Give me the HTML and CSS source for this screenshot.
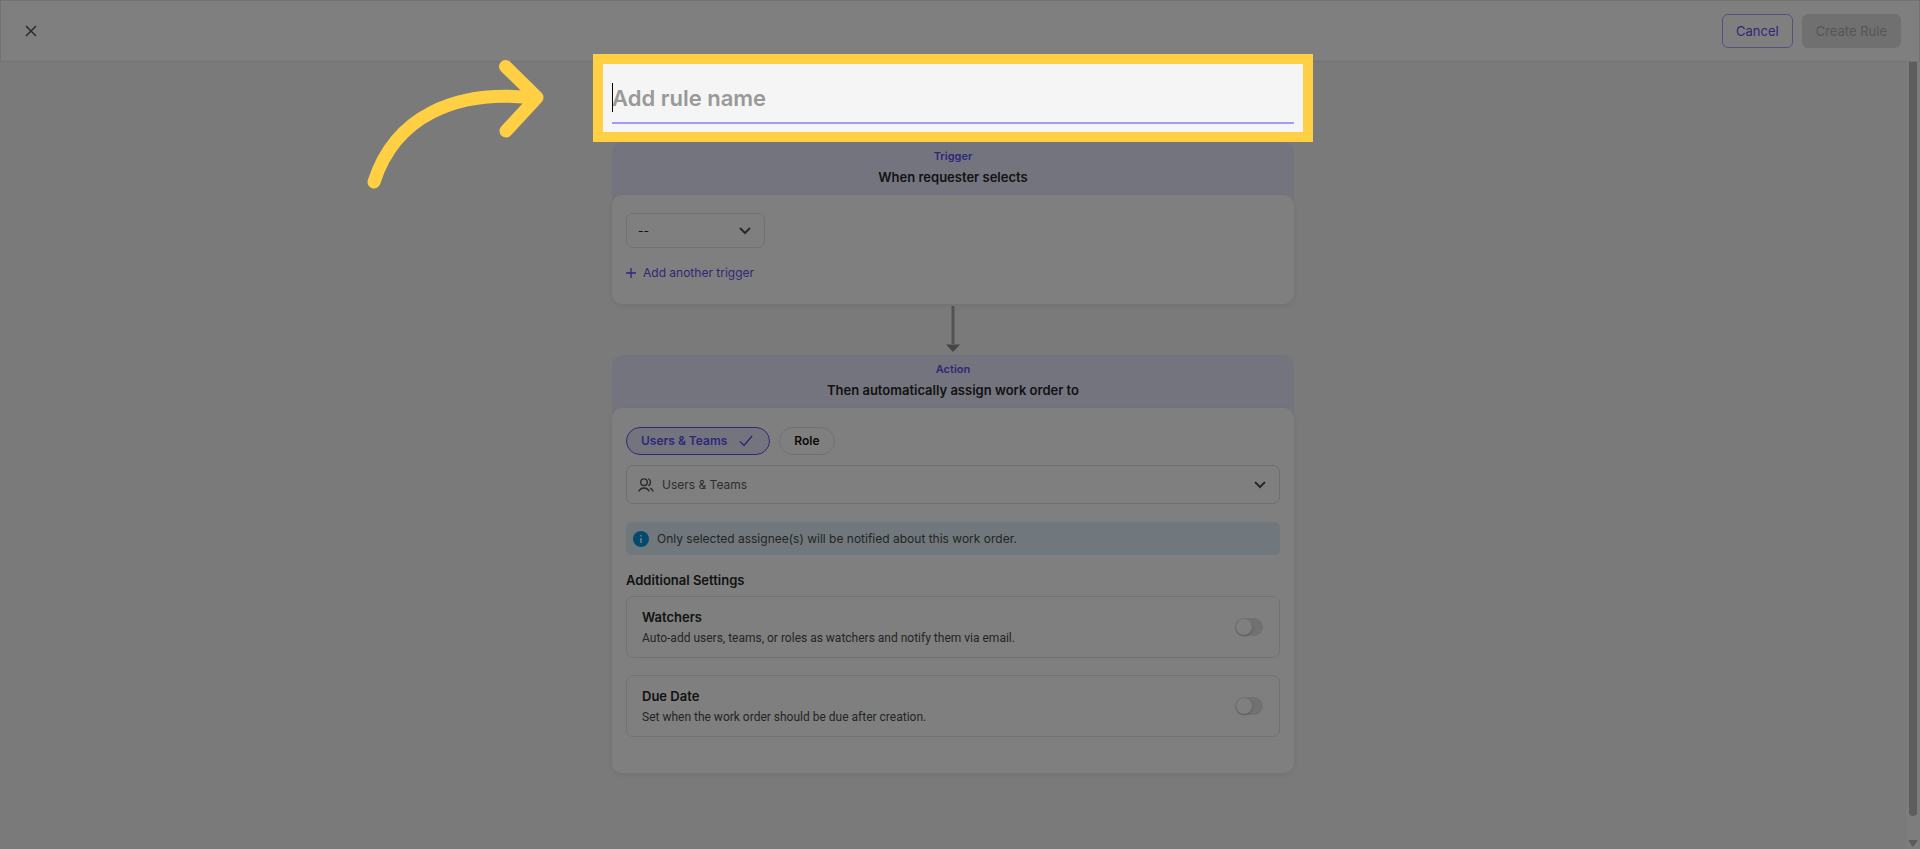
FILE: index.html
```html
<!DOCTYPE html>
<html lang="en">
<head>
<meta charset="utf-8">
<title>Create Rule</title>
<link rel="stylesheet" href="styles.css">
</head>
<body>
<div class="page">
  <header class="topbar">
    <button class="close" type="button" aria-label="Close">
      <svg width="12" height="12" viewBox="0 0 12 12" fill="none" stroke="currentColor" stroke-width="1.5"><path d="M1 1l10 10M11 1L1 11"/></svg>
    </button>
    <div class="topbar-actions">
      <button class="btn btn-outline" type="button">Cancel</button>
      <button class="btn btn-disabled" type="button" disabled>Create Rule</button>
    </div>
  </header>
  <div class="scroller">
    <main class="content">
      <div class="rule-name">
        <input class="rule-input" type="text" placeholder="Add rule name" aria-label="Rule name">
        <span class="caret"></span>
        <div class="spotlight"></div>
        <svg class="pointer" width="180" height="132" viewBox="0 0 180 132" fill="none" stroke="#ffd043" stroke-width="13" stroke-linecap="round" stroke-linejoin="round"><path d="M10 123C31 57 92 31 165 38.500"/><path d="M141.500 7.500L173 38.500L142 72"/></svg>
      </div>

      <section class="card">
        <div class="card-head">
          <p class="kind">Trigger</p>
          <h2 class="title">When requester selects</h2>
        </div>
        <div class="card-body">
          <div class="select-box select-small">
            <select class="select" aria-label="Trigger"><option>--</option></select>
            <svg class="chevron" width="12" height="8" viewBox="0 0 12 8" fill="none" stroke="currentColor" stroke-width="2"><path d="M1 1l5 5 5-5"/></svg>
          </div>
          <button class="add" type="button">
            <svg width="10" height="10" viewBox="0 0 10 10" fill="none" stroke="currentColor" stroke-width="1.300"><path d="M5 0v10M0 5h10"/></svg>
            Add another trigger
          </button>
        </div>
      </section>

      <svg class="connector" width="14" height="51" viewBox="0 0 14 51"><path fill="#a6a6a6" d="M5.500 2h3v38h-3z"/><path fill="#8c8c8c" d="M0 40.500h14l-7 7.500z"/></svg>

      <section class="card">
        <div class="card-head">
          <p class="kind">Action</p>
          <h2 class="title">Then automatically assign work order to</h2>
        </div>
        <div class="card-body">
          <div class="pills">
            <button class="pill pill-on" type="button" aria-pressed="true">Users &amp; Teams
              <svg width="14" height="12" viewBox="0 0 14 12" fill="none" stroke="currentColor" stroke-width="1.500"><path d="M1 6.500l4 4L13 1"/></svg>
            </button>
            <button class="pill" type="button" aria-pressed="false">Role</button>
          </div>
          <div class="select-box select-wide">
            <svg class="people" width="16" height="14" viewBox="0 0 16 14" fill="none" stroke="currentColor" stroke-width="1.400" stroke-linecap="round"><circle cx="6" cy="4.200" r="3.300"/><path d="M1 13c1-2 2.800-3 5-3s4 1 5 3M10.800 1c2.200 1.200 2.200 5.200 0 6.400M12.500 10.300c1 .500 1.900 1.300 2.500 2.700"/></svg>
            <select class="select" aria-label="Assignee"><option>Users &amp; Teams</option></select>
            <svg class="chevron" width="12" height="8" viewBox="0 0 12 8" fill="none" stroke="currentColor" stroke-width="2"><path d="M1 1l5 5 5-5"/></svg>
          </div>
          <div class="notice">
            <svg width="16" height="16" viewBox="0 0 16 16"><circle cx="8" cy="8" r="8" fill="#0696dc"/><path d="M7.200 7h1.600v5H7.200zM7.200 4h1.600v1.600H7.200z" fill="#e0f0fa"/></svg>
            Only selected assignee(s) will be notified about this work order.
          </div>
          <h3 class="subhead">Additional Settings</h3>
          <div class="settings">
            <label class="setting">
              <span class="setting-text">
                <span class="setting-name">Watchers</span>
                <span class="setting-desc">Auto-add users, teams, or roles as watchers and notify them via email.</span>
              </span>
              <input class="toggle" type="checkbox" role="switch">
            </label>
            <label class="setting">
              <span class="setting-text">
                <span class="setting-name">Due Date</span>
                <span class="setting-desc">Set when the work order should be due after creation.</span>
              </span>
              <input class="toggle" type="checkbox" role="switch">
            </label>
          </div>
        </div>
      </section>
    </main>
    <div class="scrollbar" aria-hidden="true">
      <div class="thumb"></div>
      <svg width="10" height="7" viewBox="0 0 10 7"><path d="M1.500 0h7q1.500 0 .7 1.200L6 6q-1 1.200-2 0L.8 1.200Q0 0 1.500 0z" fill="#b8b8b8"/></svg>
    </div>
  </div>
</div>
</body>
</html>
```
FILE: styles.css
```css
* {
  box-sizing: border-box;
}

body {
  margin: 0;
  overflow: hidden;
  font-family: Inter, "Open Sans", sans-serif;
  font-size: 12px;
  line-height: 16px;
  color: #262626;
  background: #f5f5f5;
}

p, h2, h3 {
  margin: 0;
}

button, input, select {
  font: inherit;
  color: inherit;
}

.page {
  display: flex;
  flex-direction: column;
  height: 100vh;
}

.topbar {
  display: flex;
  align-items: center;
  justify-content: space-between;
  height: 62px;
  padding: 0 18px 0 19px;
  border: 1px solid #e6e6e6;
  background: #fff;
}

.close {
  display: flex;
  padding: 5px;
  border: 0;
  background: none;
  color: #555;
}

.topbar-actions {
  display: flex;
  gap: 9px;
}

.btn {
  height: 34px;
  padding: 0 13px;
  border: 1px solid transparent;
  border-radius: 6px;
  font-size: 13px;
}

.btn-outline {
  border-color: #a9a3ff;
  background: #fff;
  color: #5d50f0;
}

.btn-disabled {
  background: #e0e0e0;
  color: #adadad;
}

.scroller {
  display: flex;
  flex: 1;
  min-height: 0;
}

.content {
  display: flex;
  flex: 1;
  flex-direction: column;
  align-items: center;
  padding-top: 12px;
}

.content > .rule-name,
.content > .card {
  width: 682px;
  max-width: 100%;
}

.rule-name {
  position: relative;
  margin-bottom: 18px;
}

.rule-input {
  display: block;
  width: 100%;
  height: 50px;
  padding: 0;
  border: 0;
  border-bottom: 2px solid #a09aff;
  outline: 0;
  background: transparent;
  font-size: 22px;
  font-weight: 600;
}

.rule-input::placeholder {
  color: #999;
}

.caret {
  position: absolute;
  left: 0;
  top: 9px;
  width: 1px;
  height: 29px;
  background: #000;
}

/* Dims everything around the highlighted field */
.spotlight {
  position: absolute;
  z-index: 2;
  inset: -20px -19px -18px;
  border: 10px solid #ffd043;
  box-shadow: 0 0 0 3000px rgba(0, 0, 0, .5);
  pointer-events: none;
}

.pointer {
  position: absolute;
  z-index: 3;
  right: 100%;
  top: -15px;
  margin-right: 68px;
}

.card-head {
  padding: 6px 14px 20px;
  margin-bottom: -10px;
  border-radius: 10px 10px 0 0;
  background: #e9e9fd;
  text-align: center;
}

.kind {
  font-size: 11px;
  font-weight: 600;
  color: #5d50f0;
}

.title {
  padding-top: 5px;
  font-size: 13px;
  font-weight: 600;
  line-height: 16px;
}

.card-body {
  position: relative;
  padding: 18px 14px;
  border-radius: 10px;
  background: #fff;
  box-shadow: 0 2px 6px rgba(0, 0, 0, .08);
}

.select-box {
  position: relative;
}

.select-small {
  width: 139px;
}

.select {
  display: block;
  width: 100%;
  height: 35px;
  padding: 0 11px;
  appearance: none;
  border: 1px solid #e2e2e2;
  border-radius: 7px;
  background: #fff;
}

.select-wide .select {
  height: 39px;
  padding-left: 35px;
  border-color: #dcdcdc;
  color: #5c5c5c;
}

.chevron {
  position: absolute;
  right: 14px;
  top: 50%;
  margin-top: -4px;
  color: #555;
  pointer-events: none;
}

.people {
  position: absolute;
  left: 12px;
  top: 50%;
  margin-top: -7px;
  color: #555;
}

.add {
  display: flex;
  align-items: center;
  gap: 7px;
  padding: 0;
  margin: 17px 0 5px;
  border: 0;
  background: none;
  color: #5d50f0;
}

.connector {
  flex: none;
}

.pills {
  display: flex;
  gap: 9px;
  margin: 1px 0 10px;
}

.pill {
  display: flex;
  align-items: center;
  gap: 12px;
  height: 28px;
  padding: 0 14px;
  border: 1px solid #e2e2e2;
  border-radius: 14px;
  background: #fff;
  font-weight: 600;
  color: #111;
}

.pill-on {
  padding: 0 16px 0 14px;
  border-color: #5d50f0;
  background: #e9e9fd;
  color: #5d50f0;
}

.notice {
  display: flex;
  align-items: center;
  gap: 8px;
  min-height: 33px;
  padding: 0 7px;
  margin: 18px 0 17px;
  border-radius: 5px;
  background: #e0f0fa;
  color: #4a4a4a;
}

.subhead {
  margin-bottom: 8px;
  font-size: 13px;
  font-weight: 600;
  line-height: 16px;
}

.settings {
  display: flex;
  flex-direction: column;
  gap: 17px;
  padding-bottom: 18px;
}

.setting {
  display: flex;
  align-items: center;
  justify-content: space-between;
  min-height: 62px;
  padding: 0 16px 0 15px;
  border: 1px solid #e4e4e4;
  border-radius: 7px;
}

.setting-text {
  display: flex;
  flex-direction: column;
  gap: 5px;
}

.setting-name {
  font-size: 13px;
  font-weight: 600;
}

.setting-desc {
  font-family: Roboto, Inter, sans-serif;
  color: #4a4a4a;
}

.toggle {
  width: 28px;
  height: 18px;
  margin: 0;
  padding: 1px;
  appearance: none;
  border-radius: 9px;
  background: #e2e2e2;
}

.toggle::before {
  content: "";
  display: block;
  width: 16px;
  height: 16px;
  border-radius: 50%;
  background: #fff;
  box-shadow: 0 1px 2px rgba(0, 0, 0, .25);
}

.scrollbar {
  display: flex;
  flex-direction: column;
  align-items: center;
  justify-content: space-between;
  width: 14px;
  padding-bottom: 2px;
  background: #fafafa;
}

.thumb {
  width: 8px;
  height: 96%;
  border-radius: 0 0 4px 4px;
  background: #bababa;
}
```
